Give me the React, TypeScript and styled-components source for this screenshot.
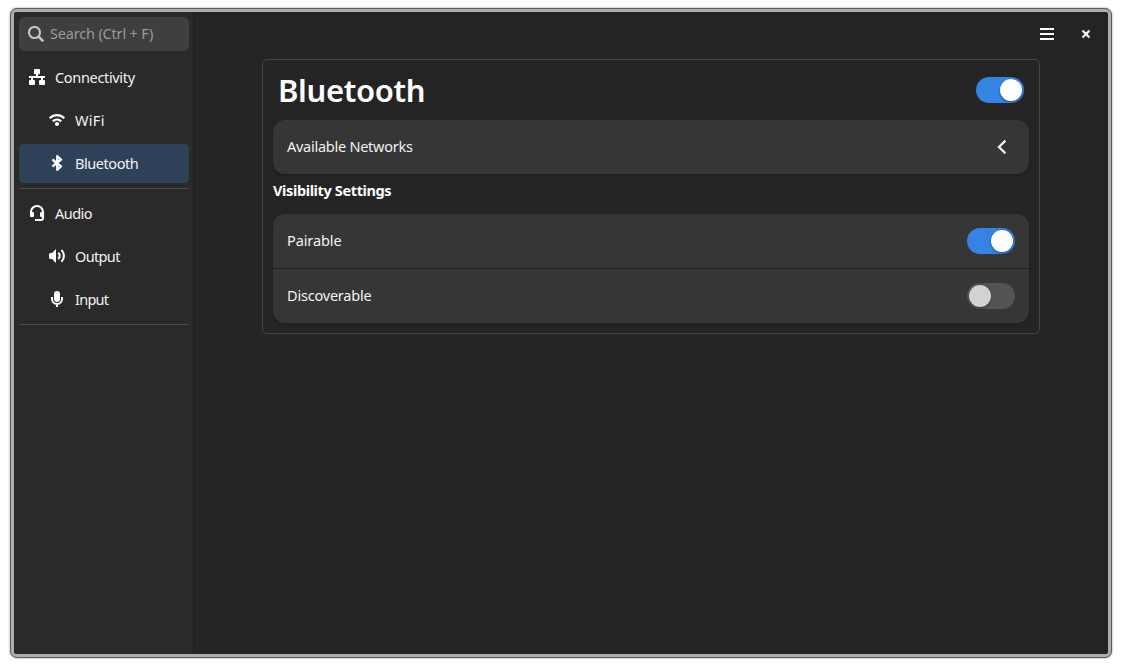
import React from "react";
import styled, { createGlobalStyle } from "styled-components";

const Global = createGlobalStyle`
  * { box-sizing: border-box; }
  body { margin: 0; background: #fff; }
`;

const Page = styled.div`
  height: 668px;
  padding: 8px 11px 10px 10px;
  overflow: hidden;
  font-family: "Noto Sans", sans-serif;
  font-size: 14.5px;
  line-height: 20px;
  color: #f2f2f2;
`;

const Window = styled.div`
  display: flex;
  height: 650px;
  border: 1px solid #5c5c5c;
  border-radius: 7px;
  padding: 3px;
  background: #adadad;
  box-shadow: 0 0 2px rgba(0, 0, 0, 0.5);
`;

const Sidebar = styled.aside`
  width: 180px;
  flex: none;
  padding: 5px 4px 0 5px;
  background: #2a2a2a;
  border-right: 1px solid #1e1e1e;
  border-radius: 2px 0 0 2px;
`;

const Search = styled.label`
  display: flex;
  align-items: center;
  gap: 6px;
  height: 34px;
  margin-bottom: 7px;
  padding-left: 9px;
  border-radius: 6px;
  background: #3f3f3f;
  color: #c6c6c6;
`;

const Text = styled.span<{ $spacing?: number }>`
  margin-top: -2px;
  letter-spacing: ${(p) => p.$spacing ?? 0}px;
  white-space: nowrap;
`;

const Placeholder = styled(Text)`
  color: #9a9a9a;
`;

const NavItem = styled.div<{ $nested?: boolean; $active?: boolean }>`
  display: flex;
  align-items: center;
  gap: 10px;
  height: 39px;
  margin-bottom: 4px;
  padding-left: ${(p) => (p.$nested ? 30 : 10)}px;
  border-radius: 5px;
  background: ${(p) => (p.$active ? "#2e4159" : "transparent")};
  & > svg {
    margin-top: -1px;
    color: #fff;
  }
`;

const Separator = styled.hr`
  height: 1px;
  margin: 5px 0;
  border: 0;
  background: #4a4a4a;
`;

const Main = styled.main`
  flex: 1;
  background: #242424;
  border-radius: 0 2px 2px 0;
`;

const HeaderBar = styled.header`
  display: flex;
  align-items: center;
  justify-content: flex-end;
  gap: 23px;
  height: 44px;
  padding-right: 14px;
  color: #fff;
`;

const Panel = styled.section`
  width: 778px;
  height: 275px;
  margin: 3px 0 0 68px;
  padding: 0 10px;
  border: 1px solid #444;
  border-radius: 5px;
`;

const TitleRow = styled.div`
  display: flex;
  align-items: center;
  justify-content: space-between;
  height: 60px;
  padding: 0 5px;
`;

const Title = styled.h1`
  margin: 0;
  font-size: 31px;
  line-height: 40px;
  font-weight: 600;
  letter-spacing: -0.35px;
  color: #fff;
`;

const Group = styled.div`
  border-radius: 12px;
  background: #363636;
  box-shadow: 0 1px 3px rgba(0, 0, 0, 0.22);
`;

const Row = styled.div`
  display: flex;
  align-items: center;
  justify-content: space-between;
  height: 54px;
  padding: 0 14px;
  & + & {
    height: 55px;
    border-top: 1px solid #222;
  }
`;

const Subtitle = styled.h2`
  height: 40px;
  margin: 0;
  padding-top: 6px;
  font-size: 14.5px;
  line-height: 20px;
  font-weight: 700;
  letter-spacing: -0.37px;
  color: #fff;
`;

const Track = styled.span<{ $on?: boolean }>`
  display: flex;
  justify-content: ${(p) => (p.$on ? "flex-end" : "flex-start")};
  width: 48px;
  height: 26px;
  padding: 2px;
  border-radius: 13px;
  background: ${(p) => (p.$on ? "#3584e4" : "#535353")};
`;

const Knob = styled.span<{ $on?: boolean }>`
  width: 22px;
  height: 22px;
  border-radius: 50%;
  background: ${(p) => (p.$on ? "#fff" : "#d2d2d2")};
  box-shadow: 0 1px 3px rgba(0, 0, 0, 0.35);
`;

const Glyph = styled.svg`
  display: block;
  flex: none;
  fill: none;
  stroke: currentColor;
`;

const Toggle = ({ on }: { on?: boolean }) => (
  <Track $on={on} role="switch" aria-checked={!!on}>
    <Knob $on={on} />
  </Track>
);

const Icon = ({ children, size = 16 }: { children: React.ReactNode; size?: number }) => (
  <Glyph width={size} height={size} viewBox={`0 0 ${size} ${size}`}>
    {children}
  </Glyph>
);

const SearchIcon = () => (
  <Icon>
    <circle cx="6.5" cy="6.5" r="5.5" strokeWidth="2.1" />
    <path d="M10.4 10.4L15.3 15.3" strokeWidth="2.6" />
  </Icon>
);

const NetworkIcon = () => (
  <Icon>
    <g fill="currentColor" stroke="none">
      <rect x="5" y="0" width="6" height="5.2" rx="1" />
      <rect x="0" y="11" width="6" height="5" rx="1" />
      <rect x="10" y="11" width="6" height="5" rx="1" />
      <path d="M7 4h2v3h7v2h-2v3h-2V9H4v3H2V9H0V7h7z" />
    </g>
  </Icon>
);

const WifiIcon = () => (
  <Icon>
    <path d="M.7 6.2C4.8 2 11.2 2 15.3 6.2" strokeWidth="2.3" />
    <path d="M3.8 9.4C6.2 7.1 9.8 7.1 12.2 9.4" strokeWidth="2.2" />
    <circle cx="8" cy="12" r="2.1" fill="currentColor" stroke="none" />
  </Icon>
);

const BluetoothIcon = () => (
  <Icon>
    <path d="M3.4 4.5L12 11.5L8.2 14.8V1.2L12 4.5L3.4 11.5" strokeWidth="2.3" strokeLinejoin="round" />
  </Icon>
);

const HeadsetIcon = () => (
  <Icon>
    <path d="M2 9V7a6 6 0 0 1 12 0v6q0 2-2 2H6" strokeWidth="2.1" />
    <rect x="1" y="7" width="4" height="5" rx="1" fill="currentColor" stroke="none" />
    <rect x="11" y="7" width="4" height="5" rx="1" fill="currentColor" stroke="none" />
  </Icon>
);

const SpeakerIcon = () => (
  <Icon>
    <path d="M7 1v14L3 11H1.5Q0 11 0 9.5V6.5Q0 5 1.5 5H3z" fill="currentColor" stroke="none" />
    <path d="M9.2 4.9C11.2 6.2 11.2 9.4 9.2 10.9" strokeWidth="2.1" />
    <path d="M12.4 2C15.8 5.2 15.8 10.4 12.4 13.8" strokeWidth="2.1" />
  </Icon>
);

const MicIcon = () => (
  <Icon>
    <rect x="5" y="0" width="6" height="11" rx="3" fill="currentColor" stroke="none" />
    <path d="M3 6V8a5 5 0 0 0 10 0V6M8 13v3" strokeWidth="2" />
  </Icon>
);

const MenuIcon = () => (
  <Icon>
    <path d="M1 3h14M1 8h14M1 13h14" strokeWidth="2" />
  </Icon>
);

const CloseIcon = () => (
  <Icon>
    <path d="M4.5 4.5L11.5 11.5M11.5 4.5L4.5 11.5" strokeWidth="2.3" />
  </Icon>
);

const ChevronIcon = () => (
  <Icon size={26}>
    <path d="M16.4 6.6L10 13L16.4 19.4" strokeWidth="2.3" />
  </Icon>
);

export default function App() {
  return (
    <Page>
      <Global />
      <Window>
        <Sidebar>
          <Search>
            <SearchIcon />
            <Placeholder $spacing={-0.18}>Search (Ctrl + F)</Placeholder>
          </Search>
          <NavItem><NetworkIcon /><Text $spacing={-0.33}>Connectivity</Text></NavItem>
          <NavItem $nested><WifiIcon /><Text $spacing={0.3}>WiFi</Text></NavItem>
          <NavItem $nested $active><BluetoothIcon /><Text $spacing={-0.44}>Bluetooth</Text></NavItem>
          <Separator />
          <NavItem><HeadsetIcon /><Text $spacing={-0.55}>Audio</Text></NavItem>
          <NavItem $nested><SpeakerIcon /><Text $spacing={-0.65}>Output</Text></NavItem>
          <NavItem $nested><MicIcon /><Text $spacing={-0.75}>Input</Text></NavItem>
          <Separator />
        </Sidebar>
        <Main>
          <HeaderBar>
            <MenuIcon />
            <CloseIcon />
          </HeaderBar>
          <Panel>
            <TitleRow>
              <Title>Bluetooth</Title>
              <Toggle on />
            </TitleRow>
            <Group>
              <Row><Text $spacing={-0.26}>Available Networks</Text><ChevronIcon /></Row>
            </Group>
            <Subtitle>Visibility Settings</Subtitle>
            <Group>
              <Row><Text $spacing={-0.1}>Pairable</Text><Toggle on /></Row>
              <Row><Text $spacing={-0.2}>Discoverable</Text><Toggle /></Row>
            </Group>
          </Panel>
        </Main>
      </Window>
    </Page>
  );
}
